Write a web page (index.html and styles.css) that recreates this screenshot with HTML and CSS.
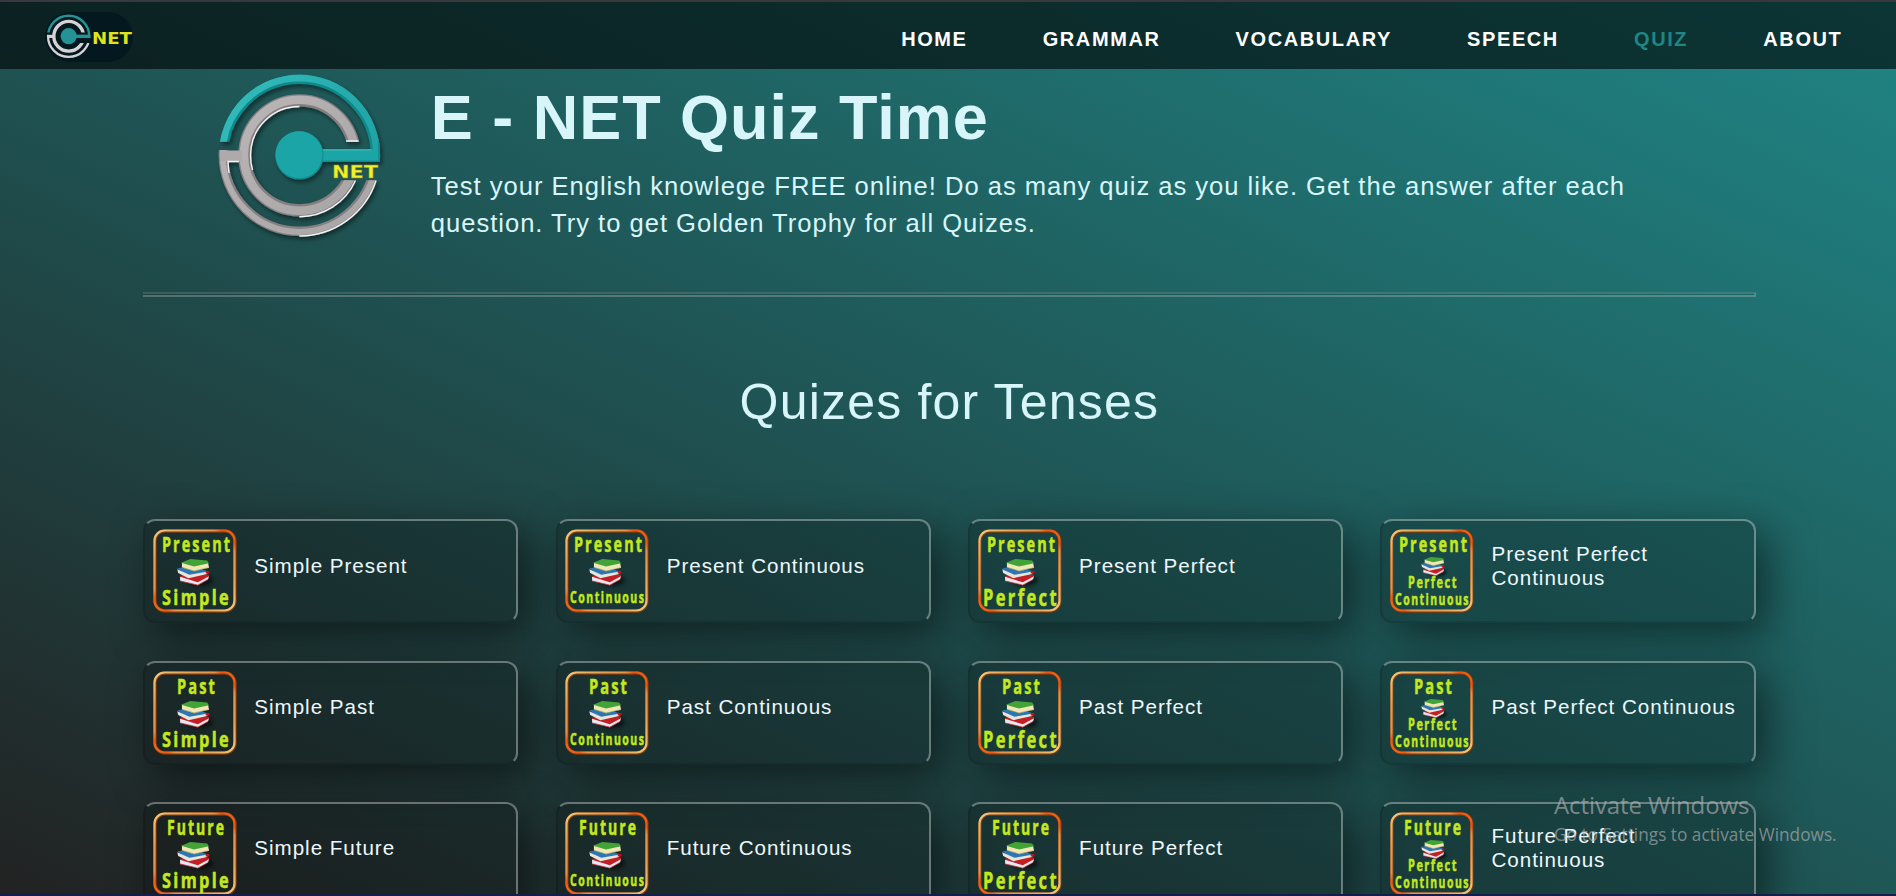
FILE: index.html
```html
<!DOCTYPE html>
<html lang="en">
<head>
<meta charset="utf-8">
<title>E-NET Quiz</title>
<link rel="stylesheet" href="styles.css">
</head>
<body>
<svg class="defs" aria-hidden="true">
  <defs>
    <linearGradient id="frame" x1="0" y1="1" x2="1" y2="0">
      <stop offset="0" stop-color="#ee6a1c"/>
      <stop offset=".08" stop-color="#ee5f14"/>
      <stop offset=".13" stop-color="#e4934c"/>
      <stop offset=".3" stop-color="#e5a050"/>
      <stop offset=".5" stop-color="#efc67a"/>
      <stop offset=".7" stop-color="#e5a457"/>
      <stop offset=".87" stop-color="#e4934c"/>
      <stop offset=".92" stop-color="#ee5410"/>
      <stop offset="1" stop-color="#ee6a1c"/>
    </linearGradient>
    <linearGradient id="steel" x1="0" y1="0" x2="1" y2="1">
      <stop offset="0" stop-color="#bab5b6"/>
      <stop offset="1" stop-color="#a8a5a6"/>
    </linearGradient>
    <linearGradient id="teal" x1="0" y1="0" x2="1" y2=".6">
      <stop offset="0" stop-color="#36bcbd"/>
      <stop offset="1" stop-color="#1ea1a3"/>
    </linearGradient>
    <filter id="drop" x="-20%" y="-20%" width="150%" height="150%">
      <feDropShadow dx="2" dy="3" stdDeviation="2" flood-color="#000" flood-opacity=".45"/>
    </filter>
    <clipPath id="cut-arc"><path d="M0 0H170V89H84V68.700H0Z"/></clipPath>
    <clipPath id="cut-ring"><path d="M0 0H170V68.700H100V107.300H170V172H0Z"/></clipPath>
    <clipPath id="cut-bowl"><path d="M0 77H84V107.300H170V172H0Z"/></clipPath>
    <symbol id="books" viewBox="0 0 38 30" overflow="visible">
      <ellipse cx="24" cy="23" rx="14" ry="6" fill="#000" opacity=".6" class="soft"/>
      <path d="M3 18 16 15 34 17 34 19 22 26 4 21Z" fill="#c41e24"/>
      <path d="M3 19 22 25 34 18.500 33 22 22 28 3 23.500Z" fill="#e4e8f0"/>
      <path d="M3 23.500 22 28 33 22" fill="none" stroke="#c8242c" stroke-width=".8"/>
      <path d="M0 10 14 8 33 13 30 16 13 19Z" fill="#2b76b5"/>
      <path d="M0 11 13 17 33 13.500 32 16 12 20.500 1 15Z" fill="#e6e6dc"/>
      <path d="M30.500 13h4v2.500h-4z" fill="#d00b12"/>
      <path d="M5 4 5 9 18 13 34 9.500 33 4Z" fill="#f3e6b5"/>
      <path d="M4 4 14 0 32 1.500 34 4.500 18 8Z" fill="#42a437"/>
      <path d="M5 9 18 12.800 33 9.500" fill="none" stroke="#7a8a50" stroke-width=".6"/>
    </symbol>
  </defs>
</svg>

<header class="topbar">
  <a class="brand">
    <svg viewBox="0 0 88 50" width="88" height="50">
      <g transform="translate(.9 2) scale(.27)" fill="none">
        <g clip-path="url(#cut-arc)"><circle cx="84.400" cy="82.300" r="76" stroke="#259393" stroke-width="9"/></g>
        <path d="M84 82.600H164.500" stroke="#259393" stroke-width="12.700"/>
        <circle cx="84.400" cy="82.300" r="30" fill="#259393"/>
        <g clip-path="url(#cut-ring)"><circle cx="84.400" cy="82.300" r="55" stroke="#d6d2d3" stroke-width="12.500"/></g>
        <g clip-path="url(#cut-bowl)"><circle cx="84.400" cy="82.300" r="76.500" stroke="#d6d2d3" stroke-width="8.500"/></g>
        <path d="M4 83H28" stroke="#d6d2d3" stroke-width="12"/>
      </g>
      <text x="47" y="32" class="brand-net" textLength="40" lengthAdjust="spacingAndGlyphs">NET</text>
    </svg>
  </a>
  <nav class="nav">
    <a>HOME</a><a>GRAMMAR</a><a>VOCABULARY</a><a>SPEECH</a><a class="active">QUIZ</a><a>ABOUT</a>
  </nav>
</header>

<main class="page">
  <section class="hero">
    <svg class="hero-logo" viewBox="0 0 170 172" width="170" height="172">
      <g filter="url(#drop)" fill="none">
        <g clip-path="url(#cut-arc)">
          <circle cx="84.400" cy="82.300" r="76" stroke="#0c8a8b" stroke-width="9.400"/>
          <circle cx="84.400" cy="82.300" r="77.200" stroke="url(#teal)" stroke-width="6.800"/>
        </g>
        <path d="M100 82.600H164.700" stroke="#1fa5a7" stroke-width="12.700"/>
        <path d="M106 77H156" stroke="#35b6b7" stroke-width="1.500"/>
        <path d="M106 88.300H164.700" stroke="#0f8e90" stroke-width="1.600"/>
        <path d="M163.900 70V89" stroke="#0f8e90" stroke-width="1.600"/>
        <circle cx="84.400" cy="82.300" r="24.200" fill="#0f9092"/>
        <circle cx="84" cy="81.600" r="23.400" fill="#1fa5a7"/>
        <g clip-path="url(#cut-ring)">
          <circle cx="84.400" cy="82.300" r="55" stroke="#857f80" stroke-width="12.300"/>
          <circle cx="84.400" cy="82.300" r="55.500" stroke="url(#steel)" stroke-width="8.500"/>
        </g>
        <g clip-path="url(#cut-bowl)">
          <circle cx="84.400" cy="82.300" r="76" stroke="#857f80" stroke-width="9.600"/>
          <circle cx="84.400" cy="82.300" r="76.600" stroke="url(#steel)" stroke-width="6"/>
        </g>
        <path d="M5 83H27" stroke="#aeaaab" stroke-width="11"/>
        <path d="M84.400 33.500A48.900 48.900 0 0 0 35.500 82.300Q35.500 90 37.500 97M14 100Q13.200 94 13 88.500H24M84.400 143.700A61.400 61.400 0 0 0 140.500 107.500M84.400 163A80.700 80.700 0 0 0 161.100 107.500M131 68H143.500" stroke="#f4f2f2" stroke-width="1.400"/>
      </g>
      <text x="117" y="104.500" class="hero-net" textLength="46" lengthAdjust="spacingAndGlyphs">NET</text>
    </svg>
    <div class="hero-copy">
      <h1>E - NET Quiz Time</h1>
      <p>Test your English knowlege FREE online! Do as many quiz as you like. Get the answer after each<br>question. Try to get Golden Trophy for all Quizes.</p>
    </div>
  </section>
  <hr class="rule">
  <h2>Quizes for Tenses</h2>
  <section class="grid" id="grid"></section>
</main>

<aside class="activate">
  <div class="activate-title">Activate Windows</div>
  <div class="activate-sub">Go to Settings to activate Windows.</div>
</aside>
<div class="taskbar"></div>
<script src="quizzes.js"></script>
</body>
</html>
```
FILE: styles.css
```css
* { box-sizing: border-box; }
html, body { height: 100%; }
body {
  margin: 0;
  height: 896px;
  overflow: hidden;
  display: flex;
  flex-direction: column;
  font-family: "Liberation Sans", Arial, sans-serif;
  background: linear-gradient(to top right, #222 0%, #1f5656 50%, #208585 100%);
  color: #d8f5fa;
}
.defs { position: absolute; width: 0; height: 0; }
.soft { filter: blur(2px); }

.topbar {
  flex: none;
  height: 69px;
  border-top: 2px solid #39383c;
  background: rgba(0, 0, 0, .6);
  display: flex;
  align-items: center;
  justify-content: space-between;
  padding: 0 53.600px 0 45px;
}
.brand {
  display: block;
  width: 88px;
  height: 50px;
  margin-top: 3px;
  border-radius: 25px;
  background: #03181f;
}
.brand svg { display: block; }
.brand-net { font: 700 16px "DejaVu Sans", sans-serif; fill: #dfe31c; }
.nav {
  display: flex;
  gap: 75.100px;
  padding-top: 8px;
  font-size: 20px;
  font-weight: 700;
  letter-spacing: 1.600px;
  color: #fff;
}
.nav .active { color: #208585; }

.page { flex: 1; min-height: 0; padding: 0 140.500px 0 143.300px; }
.hero { display: flex; height: 223px; padding: 4px 0 0 72px; }
.hero-logo { flex: none; }
.hero-net { font: 700 18px "DejaVu Sans", sans-serif; fill: #f1ef2c; stroke: #8a8a10; stroke-width: .3px; }
.hero-copy { margin-left: 45.500px; padding-top: 8px; white-space: nowrap; }
h1 { margin: 0; font-size: 63px; line-height: 72px; letter-spacing: .970px; }
.hero-copy p { margin: 15px 0 0; font-size: 25.600px; line-height: 37px; letter-spacing: .975px; }
.rule {
  height: 5px;
  margin: 0;
  border: 0;
  border-top: 2px solid rgba(255, 255, 255, .15);
  border-right: 2px solid rgba(255, 255, 255, .25);
  border-bottom: 2px solid rgba(255, 255, 255, .25);
  background: rgba(0, 0, 0, .1);
}
h2 {
  margin: 77px 0 0;
  font-size: 50px;
  font-weight: 400;
  line-height: 56px;
  letter-spacing: 1.200px;
  text-align: center;
}
.grid {
  display: grid;
  grid-template-columns: repeat(4, 1fr);
  grid-auto-rows: 104px;
  gap: 37.200px 37.400px;
  margin-top: 89.400px;
}
.card {
  display: flex;
  align-items: center;
  padding: 0 8px 0 7.500px;
  border: 2px solid rgba(0, 0, 0, .12);
  border-top-color: rgba(255, 255, 255, .35);
  border-right-color: rgba(255, 255, 255, .35);
  border-radius: 12px;
  background: rgba(0, 0, 0, .2);
  box-shadow: 12px 12px 42px rgba(0, 0, 0, .5);
}
.badge { flex: none; display: block; }
.card-label {
  margin: 0 0 11px 17.500px;
  font-size: 20.600px;
  line-height: 24.200px;
  letter-spacing: .970px;
  color: #eef8fc;
}
.badge-text {
  font-family: "Open Sans", sans-serif;
  font-weight: 700;
  fill: #c4e81e;
  stroke: #c4e81e;
  stroke-width: .5px;
}

.activate {
  position: absolute;
  left: 1554px;
  top: 789px;
  font-family: "Open Sans", "Noto Sans", sans-serif;
  color: rgba(180, 180, 180, .65);
  white-space: nowrap;
}
.activate-title { font-size: 24px; line-height: 32px; letter-spacing: -.100px; }
.activate-sub { font-size: 17.250px; line-height: 28px; }
.taskbar { position: absolute; left: 0; right: 0; top: 894px; height: 2px; background: #151d4a; }
```
FILE: quizzes.js
```js
const eras = ["Present", "Past", "Future"];
const kinds = ["Simple", "Continuous", "Perfect", "Perfect Continuous"];
const eraBox = { Present: [9, 70], Past: [24, 40], Future: [14, 59] };

function text(word, x, y, size, width) {
  return `<text class="badge-text" x="${x}" y="${y}" font-size="${size}" textLength="${width}" letter-spacing="${size / 7}" lengthAdjust="spacingAndGlyphs">${word}</text>`;
}

function badge(era, kind) {
  const [x, w] = eraBox[era];
  let lower;
  if (kind === "Simple") lower = text("Simple", 9, 75.5, 22, 69);
  else if (kind === "Continuous") lower = text("Continuous", 5, 74, 16, 75.5);
  else if (kind === "Perfect") lower = text("Perfect", 5, 76.5, 24, 76);
  else lower = text("Perfect", 18, 59, 16, 50) + text("Continuous", 5, 75.5, 16, 75);
  const small = kind === "Perfect Continuous";
  const books = small
    ? '<use href="#books" x="31" y="28" width="26" height="20"/>'
    : '<use href="#books" x="24" y="30" width="36" height="28"/>';
  return `<svg class="badge" viewBox="0 0 84 84" width="84" height="84">
    <rect x="2" y="2" width="80" height="80" rx="10" fill="none" stroke="#7a3a12" stroke-width="3.4"/>
    <rect x="1.500" y="1.500" width="80" height="80" rx="10" fill="none" stroke="url(#frame)" stroke-width="2.200"/>
    ${books}${text(era, x, 23, 21, w)}${lower}</svg>`;
}

document.getElementById("grid").innerHTML = eras.map(era => kinds.map(kind => {
  const label = kind === "Simple" ? `Simple ${era}` : `${era} ${kind}`;
  return `<article class="card">${badge(era, kind)}<div class="card-label">${label}</div></article>`;
}).join("")).join("");
```
